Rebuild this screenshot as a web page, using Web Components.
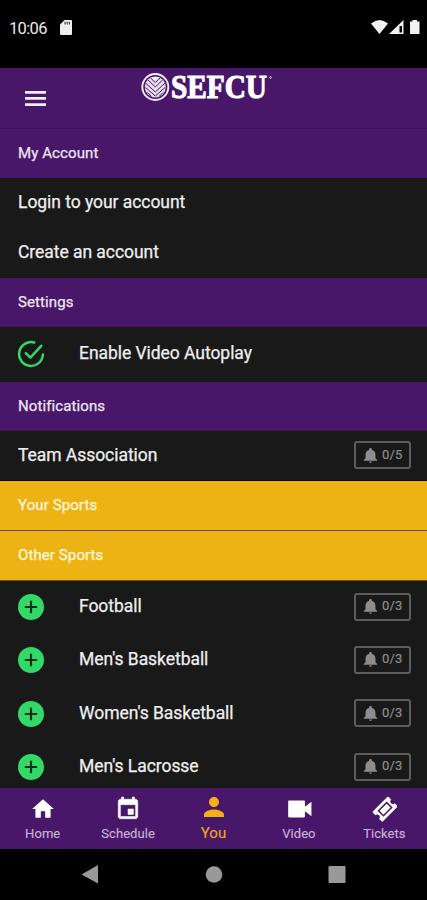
<!DOCTYPE html>
<html lang="en">
<head>
<meta charset="utf-8">
<title>Account</title>
<style>
html, body { margin: 0; background: #000; }
body { width: 427px; height: 900px; overflow: hidden; font-family: Roboto, "Liberation Sans", sans-serif; color: #efefef; }
</style>
</head>
<body>
<phone-screen></phone-screen>
<script>
const define = (name, html) => customElements.define(name, class extends HTMLElement {
  constructor() {
    super();
    const t = document.createElement('template');
    t.innerHTML = typeof html === 'function' ? html(this) : html;
    this.attachShadow({ mode: 'open' }).append(t.content.cloneNode(true));
  }
});

const icons = {
  home: '<path d="M10 20v-6h4v6h5v-8h3L12 3 2 12h3v8z"/>',
  schedule: '<path d="M17 12h-5v5h5v-5zM16 1v2H8V1H6v2H5c-1.110 0-2 .9-2 2v14c0 1.100.89 2 2 2h14c1.100 0 2-.9 2-2V5c0-1.100-.9-2-2-2h-1V1h-2zm3 18H5V8h14v11z" stroke="currentColor" stroke-width=".5"/>',
  you: '<path d="M12 12c2.210 0 4-1.790 4-4s-1.790-4-4-4-4 1.790-4 4 1.790 4 4 4zm0 2c-2.670 0-8 1.340-8 4v2h16v-2c0-2.660-5.330-4-8-4z" transform="translate(-1.800 -1.800) scale(1.150)"/>',
  video: '<path d="M17.500 10V5.200c0-.6-.4-1-1-1H3c-.6 0-1 .4-1 1v13.600c0 .6.4 1 1 1h13.500c.6 0 1-.4 1-1V14l6 4.700V5.300z"/>',
  tickets: '<g transform="translate(1 .2) rotate(-45 12 12) scale(.93) translate(.9 .9)"><path fill-rule="evenodd" d="M2 5h20a1 1 0 0 1 1 1v3.500a2.500 2.500 0 0 0 0 5V18a1 1 0 0 1-1 1H2a1 1 0 0 1-1-1v-3.500a2.500 2.500 0 0 0 0-5V6a1 1 0 0 1 1-1zM5.500 7.800v8.400h13V7.800z"/><path d="M7 9.300h10v5.400H7z"/></g>',
  bell: '<path d="M12 22.500c1.100 0 2-.9 2-2h-4c0 1.100.9 2 2 2zm7-6.500v-5.500c0-3.070-1.940-5.640-5-6.320V3.500a2 2 0 0 0-4 0v.68C6.930 4.860 5 7.420 5 10.500V16l-2.500 2.500v1h19v-1z"/>',
  check: '<g fill="none" stroke="currentColor" stroke-width="2.300" stroke-linecap="round" stroke-linejoin="round"><path d="M15 1.400A11 11 0 1 0 23 12.500"/><path d="M7.200 11.200l4.200 4.200L21.500 4.500"/></g>',
  plus: '<circle cx="12" cy="12" r="12"/><path d="M12 6.300v11.400M6.300 12h11.400" stroke="#152b1b" stroke-width="2"/>'
};
const svg = n => `<svg viewBox="0 0 24 24" fill="currentColor">${icons[n] || ''}</svg>`;

define('status-bar', `<style>
:host { display: flex; height: 68px; box-sizing: border-box; padding: 16px 6px 30px 9px; align-items: center; background: #000; color: #e9e9e9; font-size: 16.500px; }
span { margin: 2px 13px 0 0; letter-spacing: -.65px; }
.card { width: 12px; height: 15px; }
.signals { margin-left: auto; width: 50px; height: 16px; }
</style><span>10:06</span>
<svg class="card" viewBox="0 0 12 15"><path fill="#eee" d="M4.500 0H11a1 1 0 0 1 1 1v13a1 1 0 0 1-1 1H1a1 1 0 0 1-1-1V4.500z"/><path stroke="#333" stroke-width="1.100" d="M5 1.800v2.700M7.200 1.800v2.700M9.400 1.800v2.700"/></svg>
<svg class="signals" viewBox="371 19 50 16" fill="#f2f2f2"><path d="M371 23.500Q379.500 16.500 388 23.500L379.500 34z"/><path fill-rule="evenodd" d="M389 34L403.500 20V34zM399.500 26v6.500h2.500V26z"/><path d="M410 21.500h2.500V20h4.500v1.500h2.500V34H410z"/></svg>`);

define('sponsor-logo', `<style>:host { display: block; width: 133px; height: 42px; } svg { display: block; overflow: visible; }</style>
<svg width="133" height="42" viewBox="0 0 133 42" fill="none" stroke="#f5eef8">
<g transform="translate(.5 4.500)"><circle cx="14.800" cy="14.500" r="13" stroke-width="1.900"/>
<circle cx="14.800" cy="14.500" r="10.500" fill="#e6dcec" stroke="none"/>
<path stroke="#481769" stroke-width="1" d="M7.500 7.500l7.300 7 7.300-7M5 10.500l9.800 9 9.800-9M5 15l9.800 8.500 9.800-8.500M10 5.500l4.800 4.500 4.800-4.500M7 20l4 4M22.500 20l-4 4"/>
<path d="M11 4.600h7.600L14.800 8z" fill="#fff" stroke="none"/></g>
<text x="31" y="30" textLength="96" lengthAdjust="spacingAndGlyphs" fill="#fff" stroke="#fff" stroke-width="1.100" font-family="Liberation Serif, serif" font-weight="700" font-size="33">SEFCU</text>
<circle cx="130.500" cy="9.500" r=".8" stroke-width=".8"/></svg>`);

define('app-bar', `<style>
:host { display: grid; grid-template-columns: 140px 1fr; height: 61px; box-sizing: border-box; background: #481769; border-bottom: 1px solid #3d115d; }
.menu { width: 21px; height: 15px; margin: 23px 0 0 25px; fill: #f3edf5; }
</style><svg class="menu" viewBox="0 0 21 15"><path d="M0 0h21v2.700H0zM0 6.100h21v2.700H0zM0 12.200h21v2.700H0z"/></svg><sponsor-logo></sponsor-logo>`);

define('section-header', `<style>
:host { display: flex; align-items: center; height: 49px; padding: 0 18px 2px; box-sizing: border-box; background: #481769; color: #efe6f4; font-size: 15px; letter-spacing: .1px; -webkit-text-stroke: .25px currentColor; }
:host([gold]) { background: #edb213; color: #fff8df; border-bottom: 1px solid #6b5318; height: 50px; padding-bottom: 1px; }
</style><slot></slot>`);

define('notify-badge', `<style>
:host { display: flex; align-items: center; width: 57px; height: 28px; box-sizing: border-box; border: 2px solid #5c5c5c; border-radius: 3px; padding-left: 6px; color: #8d8d8d; font-size: 13px; letter-spacing: .2px; -webkit-text-stroke: .2px currentColor; }
svg { width: 17px; height: 17px; margin-right: 3px; flex: none; }
span { margin-top: -2px; }
</style>${svg('bell')}<span><slot></slot></span>`);

define('list-row', el => `<style>
:host { display: flex; align-items: center; height: 50px; padding: 0 16px 1px 18px; box-sizing: border-box; background: #191919; font-size: 17.500px; letter-spacing: -.05px; }
:host([icon]) { height: 53.300px; padding-bottom: 1px; }
:host([icon=check]) { height: 55px; }
.lead { width: 61px; display: flex; color: #32d968; }
.lead svg { width: 26px; height: 26px; overflow: visible; }
slot[name=end] { display: block; margin-left: auto; }
.label { position: relative; top: -.5px; -webkit-text-stroke: .25px currentColor; }
:host([icon]) .label { top: -1px; }
:host([icon=plus]) slot[name=end] { margin-top: -1px; }
</style>${el.getAttribute('icon') ? `<div class="lead">${svg(el.getAttribute('icon'))}</div>` : ''}<span class="label"><slot></slot></span><slot name="end"></slot>`);

define('tab-item', el => `<style>
:host { display: flex; flex-direction: column; align-items: center; flex: 1; padding-top: 8px; color: #fff; font-size: 13px; }
svg { width: 26px; height: 26px; }
span { margin-top: 4px; line-height: 16px; color: #c9b2d9; letter-spacing: .05px; -webkit-text-stroke: .15px currentColor; }
:host([active]) { color: #f4b014; font-size: 15px; padding-top: 6px; }
:host([active]) span { color: #e8a81a; margin-top: 5px; }
</style>${svg(el.getAttribute('icon'))}<span><slot></slot></span>`);

define('tab-bar', `<style>:host { display: flex; height: 61px; background: #481769; }</style><slot></slot>`);

define('system-nav', `<style>
:host { display: block; height: 51px; background: #000; } svg { display: block; }
</style><svg width="427" height="51" fill="#999"><path d="M81.500 25.500L98 16v18.500z"/><circle cx="214" cy="25.500" r="8.300"/><rect x="328.500" y="17" width="17" height="17" rx="1"/></svg>`);

define('phone-screen', `<style>
:host { display: flex; flex-direction: column; width: 427px; height: 900px; }
main { flex: 1; min-height: 0; overflow: hidden; background: #191919; }
.line { height: 1px; background: #08050f; }
</style>
<status-bar></status-bar><app-bar></app-bar>
<main>
<section-header>My Account</section-header>
<list-row>Login to your account</list-row>
<list-row>Create an account</list-row>
<section-header>Settings</section-header>
<list-row icon="check">Enable Video Autoplay</list-row>
<section-header>Notifications</section-header>
<list-row style="height:49px">Team Association<notify-badge slot="end">0/5</notify-badge></list-row>
<div class="line"></div>
<section-header gold>Your Sports</section-header>
<section-header gold>Other Sports</section-header>
<list-row icon="plus">Football<notify-badge slot="end">0/3</notify-badge></list-row>
<list-row icon="plus">Men's Basketball<notify-badge slot="end">0/3</notify-badge></list-row>
<list-row icon="plus">Women's Basketball<notify-badge slot="end">0/3</notify-badge></list-row>
<list-row icon="plus">Men's Lacrosse<notify-badge slot="end">0/3</notify-badge></list-row>
</main>
<tab-bar>
<tab-item icon="home">Home</tab-item><tab-item icon="schedule">Schedule</tab-item><tab-item icon="you" active>You</tab-item><tab-item icon="video">Video</tab-item><tab-item icon="tickets">Tickets</tab-item>
</tab-bar>
<system-nav></system-nav>`);
</script>
</body>
</html>
